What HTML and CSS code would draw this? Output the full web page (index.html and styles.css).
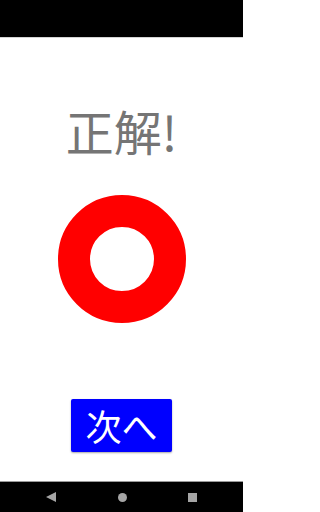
FILE: index.html
```html
<!DOCTYPE html>
<html lang="ja">
<head>
<meta charset="utf-8">
<title>正解!</title>
<link rel="stylesheet" href="styles.css">
</head>
<body>
<div class="screen">
  <div class="status-bar"></div>
  <main class="content">
    <h1 class="result-title">正解!</h1>
    <div class="ring"></div>
    <button class="next-button" type="button">次へ</button>
  </main>
  <nav class="nav-bar">
    <span class="nav-back"></span>
    <span class="nav-home"></span>
    <span class="nav-recent"></span>
  </nav>
</div>
</body>
</html>
```
FILE: styles.css
```css
html, body {
  margin: 0;
  padding: 0;
  background: #ffffff;
}

.screen {
  width: 243px;
  height: 512px;
  display: flex;
  flex-direction: column;
  overflow: hidden;
  font-family: "Noto Sans CJK JP", "Noto Sans", sans-serif;
}

.status-bar {
  height: 37px;
  flex: 0 0 auto;
  background: #000000;
  border-bottom: 1px solid #d4d4d4;
}

.content {
  flex: 1 1 auto;
  display: flex;
  flex-direction: column;
  align-items: center;
}

.result-title {
  margin: 68px 0 0;
  font-size: 48px;
  line-height: 48px;
  font-weight: 400;
  color: #757575;
}

.ring {
  margin-top: 41px;
  width: 64px;
  height: 64px;
  border: 32px solid #ff0000;
  border-radius: 50%;
}

.next-button {
  margin-top: 76px;
  width: 101px;
  height: 53px;
  padding: 0;
  border: none;
  border-radius: 2px;
  background: #0000ff;
  color: #ffffff;
  font-family: "Noto Sans CJK JP", "Noto Sans", sans-serif;
  font-size: 36px;
  line-height: 53px;
  box-shadow: 0 1px 2px rgba(0, 0, 0, 0.35);
}

.nav-bar {
  height: 30px;
  flex: 0 0 auto;
  background: #000000;
  border-top: 1px solid #9a9a9a;
  display: flex;
  align-items: center;
  justify-content: space-between;
  padding: 0 46px 0 46px;
}

.nav-back {
  width: 0;
  height: 0;
  border-top: 5px solid transparent;
  border-bottom: 5px solid transparent;
  border-right: 10px solid #a5a5a5;
}

.nav-home {
  width: 9px;
  height: 9px;
  border-radius: 50%;
  background: #a5a5a5;
}

.nav-recent {
  width: 9px;
  height: 9px;
  background: #a5a5a5;
}
```
